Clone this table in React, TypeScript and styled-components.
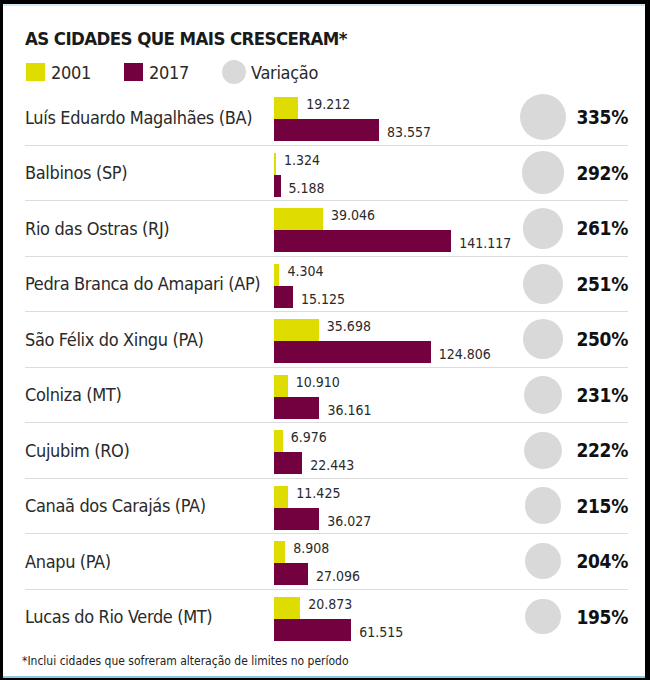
import React from "react";
import styled, { createGlobalStyle } from "styled-components";

const FONT = `"DejaVu Sans Condensed", "Liberation Sans Narrow", Roboto, sans-serif`;
const YELLOW = "#dedc00";
const PURPLE = "#73003f";
const PX_PER_UNIT = 177.3 / 141117;
const MAX_CIRCLE = 46;

interface City {
  name: string;
  y2001: number;
  y2017: number;
  growth: number;
}

const CITIES: City[] = [
  { name: "Luís Eduardo Magalhães (BA)", y2001: 19212, y2017: 83557, growth: 335 },
  { name: "Balbinos (SP)", y2001: 1324, y2017: 5188, growth: 292 },
  { name: "Rio das Ostras (RJ)", y2001: 39046, y2017: 141117, growth: 261 },
  { name: "Pedra Branca do Amapari (AP)", y2001: 4304, y2017: 15125, growth: 251 },
  { name: "São Félix do Xingu (PA)", y2001: 35698, y2017: 124806, growth: 250 },
  { name: "Colniza (MT)", y2001: 10910, y2017: 36161, growth: 231 },
  { name: "Cujubim (RO)", y2001: 6976, y2017: 22443, growth: 222 },
  { name: "Canaã dos Carajás (PA)", y2001: 11425, y2017: 36027, growth: 215 },
  { name: "Anapu (PA)", y2001: 8908, y2017: 27096, growth: 204 },
  { name: "Lucas do Rio Verde (MT)", y2001: 20873, y2017: 61515, growth: 195 },
];

const formatNumber = (n: number) => n.toLocaleString("pt-BR");

const GlobalStyle = createGlobalStyle`
  html, body {
    margin: 0;
    padding: 0;
    background: #000;
  }
  body {
    font-family: ${FONT};
    color: #1e1e1e;
  }
`;

const App: React.FC = () => {
  return (
    <>
      <GlobalStyle />
      <Frame>
        <Panel>
          <Title>AS CIDADES QUE MAIS CRESCERAM*</Title>
          <Legend>
            <LegendItem>
              <Swatch color={YELLOW} />
              2001
            </LegendItem>
            <LegendItem>
              <Swatch color={PURPLE} />
              2017
            </LegendItem>
            <LegendItem>
              <LegendDot />
              Variação
            </LegendItem>
          </Legend>
          <RowList>
            {CITIES.map((city) => {
              const size = MAX_CIRCLE * Math.sqrt(city.growth / 335);
              return (
                <Row key={city.name}>
                  <CityName>{city.name}</CityName>
                  <Bars>
                    <BarLine $top>
                      <Bar color={YELLOW} style={{ width: Math.max(2, city.y2001 * PX_PER_UNIT) }} />
                      <BarLabel $top>{formatNumber(city.y2001)}</BarLabel>
                    </BarLine>
                    <BarLine>
                      <Bar color={PURPLE} style={{ width: city.y2017 * PX_PER_UNIT }} />
                      <BarLabel>{formatNumber(city.y2017)}</BarLabel>
                    </BarLine>
                  </Bars>
                  <CircleCell>
                    <Circle style={{ width: size, height: size }} />
                  </CircleCell>
                  <Percent>{city.growth}%</Percent>
                </Row>
              );
            })}
          </RowList>
          <Footnote>*Inclui cidades que sofreram alteração de limites no período</Footnote>
        </Panel>
      </Frame>
    </>
  );
};

const Frame = styled.div`
  height: 680px;
  box-sizing: border-box;
  padding: 4px 5px 2px 3px;
  display: flex;
`;

const Panel = styled.div`
  flex: 1;
  background: #fff;
  border-top: 2px solid #d4e9f6;
  border-bottom: 2px solid #8fc6e2;
  padding: 21px 17px 0 22px;
  display: flex;
  flex-direction: column;
`;

const Title = styled.div`
  font-size: 18.5px;
  line-height: 24px;
  font-weight: bold;
  letter-spacing: -0.6px;
  color: #1a1a1a;
`;

const Legend = styled.div`
  margin-top: 9px;
  padding-left: 1px;
  display: flex;
  align-items: center;
  gap: 33px;
  height: 24px;
`;

const LegendItem = styled.div`
  display: flex;
  align-items: center;
  gap: 6px;
  font-size: 18px;
  letter-spacing: -0.3px;
  color: #2a2a2a;
`;

const Swatch = styled.span<{ color: string }>`
  width: 19px;
  height: 18px;
  background: ${(p) => p.color};
`;

const LegendDot = styled.span`
  width: 24px;
  height: 24px;
  border-radius: 50%;
  background: #d9d9d9;
  margin-right: -1px;
`;

const RowList = styled.div`
  margin-top: 6px;
  display: flex;
  flex-direction: column;
`;

const Row = styled.div`
  display: grid;
  grid-template-columns: 249px 1fr 46px 62px;
  align-items: center;
  height: 54.5px;
  border-bottom: 1px solid #dcdcdc;
  &:last-child {
    border-bottom: none;
  }
`;

const CityName = styled.div`
  font-size: 18px;
  letter-spacing: -0.35px;
  color: #2a2a2a;
  white-space: nowrap;
`;

const Bars = styled.div`
  align-self: start;
  padding-top: 7px;
  display: flex;
  flex-direction: column;
`;

const BarLine = styled.div<{ $top?: boolean }>`
  display: flex;
  align-items: ${(p) => (p.$top ? "flex-start" : "flex-end")};
  height: 22px;
`;

const Bar = styled.div<{ color: string }>`
  height: 100%;
  flex-shrink: 0;
  background: ${(p) => p.color};
`;

const BarLabel = styled.span<{ $top?: boolean }>`
  margin-left: 8px;
  font-size: 14px;
  line-height: ${(p) => (p.$top ? "14px" : "18px")};
  color: #2a2a2a;
`;

const CircleCell = styled.div`
  display: flex;
  align-items: center;
  justify-content: center;
`;

const Circle = styled.div`
  border-radius: 50%;
  background: #d9d9d9;
`;

const Percent = styled.div`
  text-align: right;
  font-size: 19px;
  font-weight: bold;
  letter-spacing: -0.3px;
  color: #111;
`;

const Footnote = styled.div`
  margin-top: 10px;
  margin-left: -3px;
  font-size: 12px;
  color: #222;
`;

export default App;
